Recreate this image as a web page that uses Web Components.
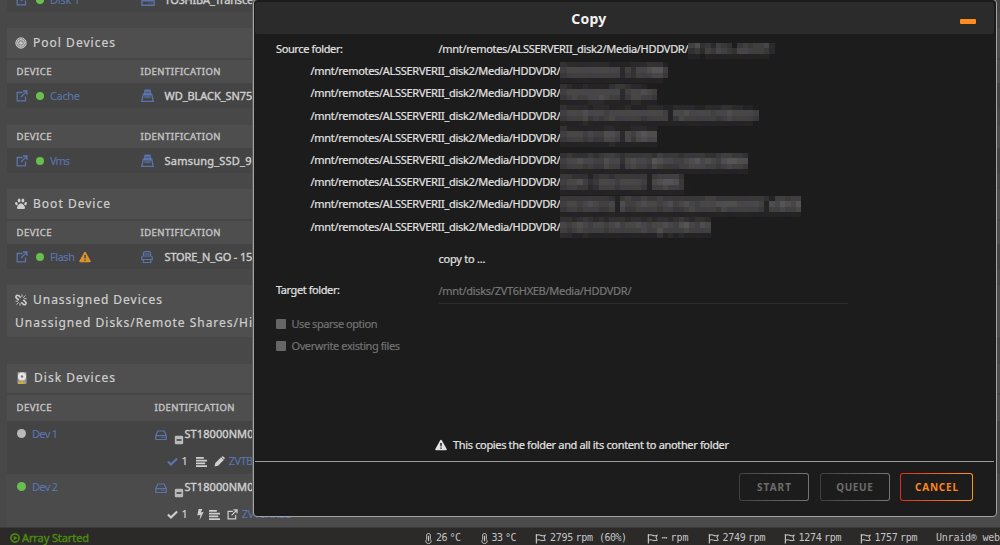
<!DOCTYPE html>
<html lang="en">
<head>
<meta charset="utf-8">
<title>Main - Copy</title>
<style>
  html, body {
    margin: 0;
    height: 545px;
    overflow: hidden;
    background: #484848;
    font-family: "Noto Sans", "Open Sans", sans-serif;
  }
</style>
</head>
<body>
<main-page></main-page>

<script>
/* ---------- ui-text: one line of text, tracked to a given width ---------- */
class UiText extends HTMLElement {
  constructor() {
    super();
    this.attachShadow({ mode: 'open' });
    this.shadowRoot.innerHTML = `
      <style>
        :host { display: block; height: 16px; line-height: 16px; flex: none; }
        span { display: inline-block; white-space: pre; height: 16px; vertical-align: top; -webkit-text-stroke: var(--heavy, .2px) currentColor; }
      </style>
      <span><slot></slot></span>
    `;
  }

  connectedCallback() {
    const width = parseFloat(this.getAttribute('width'));
    if (!width) return;
    const span = this.shadowRoot.querySelector('span');
    span.style.letterSpacing = '0px';
    const natural = span.getBoundingClientRect().width;
    const gap = (width - natural) / Math.max(1, this.textContent.length - 1);
    span.style.letterSpacing = gap.toFixed(3) + 'px';
    this.style.width = width + 'px';
  }
}

/* ---------- ui-icon: inline svg icons ---------- */
const ICONS = {
  external: '<path d="M6.5 2.5H1.2v8.3h8.3V6.5M5 7L10.6 1.4M7 1h4v4" fill="none" stroke="currentColor" stroke-width="1.3"/>',
  target: '<circle cx="6" cy="6" r="5.2" fill="#888" stroke="currentColor" stroke-width=".9"/><circle cx="6" cy="6" r="3.4" fill="none" stroke="currentColor"/><circle cx="6" cy="6" r="1.6" fill="currentColor"/>',
  paw: '<ellipse cx="4.1" cy="2.6" rx="1.4" ry="2"/><ellipse cx="7.9" cy="2.6" rx="1.4" ry="2"/><ellipse cx="1.4" cy="5.6" rx="1.2" ry="1.7" transform="rotate(-20 1.4 5.6)"/><ellipse cx="10.6" cy="5.6" rx="1.2" ry="1.7" transform="rotate(20 10.6 5.6)"/><path d="M6 5.4c2 0 4 2.600 4 4.300 0 2-2.500 1.200-4 1.200s-4 .8-4-1.200c0-1.700 2-4.300 4-4.300z"/>',
  unlink: '<g fill="none" stroke="currentColor" stroke-width="1.6" stroke-linecap="round"><path d="M5.300 3.300L3.700 1.700Q1.800.6 1.100 2.200q-.5 1 .5 2L3.300 5.700M6.700 8.700l1.600 1.600q1.900 1.100 2.600-.5.500-1-.5-2L8.700 6.300"/><path d="M3.500 8.500L1.700 10.300M5 9.500v1.800M2.600 7.200H.9M7 .8V2.500M8.500 3.500l1.600-1.800M9.400 4.700h1.800" stroke-width=".9"/></g>',
  disk: '<rect x="1.500" width="9" height="12" rx="1" fill="#999"/><circle cx="6" cy="4.500" r="4" fill="#e6e6e6"/><circle cx="6" cy="4.500" r="1.200" fill="#777"/><path d="M2 12V10l2.500.5L7 7.500v3.500l3 1z" fill="#d9a92c"/>',
  nvme: '<path d="M3.300.5h5.400l.9 5.500H2.400z"/><path d="M2.300 4L.7 11.400h10.600L9.700 4" fill="none" stroke="currentColor" stroke-width="1.200"/><path d="M3 6h6v2.500H3z" opacity=".6"/><path d="M4 3h4" stroke="#444" stroke-width=".7"/>',
  usb: '<g fill="none" stroke="currentColor" stroke-width="1.200"><path d="M2.500 5V2.200Q2.500.7 4 .7h4q1.500 0 1.500 1.500V5M.7 8.500V6.600Q.7 5 2.200 5h7.600q1.500 0 1.500 1.600v1.900z"/><path d="M2.200 8.500v3h7.600v-3M3.500 3h5"/></g>',
  hdd: '<path d="M.8 6.500L2.800 2h6.400l2 4.500v4H.8zM.8 6.700h10.400" fill="none" stroke="currentColor" stroke-width="1.200"/><path d="M6.500 8.100h1v1h-1zM8.700 8.100h1v1h-1z"/>',
  warn: '<path fill-rule="evenodd" d="M6 .8Q6.500.8 6.800 1.300L11.700 10q.4 1.200-.8 1.200H1.100Q-.1 11.200.3 10L5.200 1.300Q5.500.8 6 .8zM5.200 4l.2 3.600h1.200L6.800 4zM5.300 8.500v1.300h1.400V8.500z"/>',
  check: '<path d="M1 6l3.300 3.300L11 2.700" fill="none" stroke="currentColor" stroke-width="2.300"/>',
  lines: '<path d="M0 1h8.500v2H0zM0 4h12v2H0zM0 7h10v2H0zM0 10h12v2H0z"/>',
  pencil: '<path d="M.6 11.400l.8-3.800L7.700 1.300l3 3L4.400 10.600zM8.500.7Q9.600-.2 10.500.7l.8.8q.9.900 0 1.900l-.3.300L8.200 1z"/>',
  bolt: '<path d="M4 0h4L6.300 3.700 9.500 3 5 12l.9-5.700-3.400.8z"/>',
  minus: '<rect x="1" y="1" width="10" height="10" rx="1.500" fill="#b9b9b9"/><path d="M3 5h6v2H3z" fill="#484848"/>',
  play: '<circle cx="6" cy="6" r="4.900" fill="none" stroke="currentColor" stroke-width="1.900"/><path d="M4.400 3.300L9 6 4.400 8.700z"/>',
  thermo: '<g fill="none" stroke="currentColor"><path d="M4 7V2q0-1.500 2-1.500T8 2v5q1.300 1.200.8 2.800Q8.200 11.500 6 11.500T3.200 9.800Q2.700 8.200 4 7z"/><path d="M6 3v6" stroke-width="1.300"/></g>',
  flag: '<path d="M1.500 1v10.500" stroke="currentColor" stroke-width="1.300"/><path d="M2 2.500q2-1.200 4 0t5 0L9.800 5 11 7.800q-3 1-5 0t-4 0" fill="none" stroke="currentColor" stroke-width="1.100"/>'
};

class UiIcon extends HTMLElement {
  connectedCallback() {
    if (!this.shadowRoot) this.attachShadow({ mode: 'open' });
    const size = this.getAttribute('size') || 12;
    this.shadowRoot.innerHTML = `
      <style>
        :host { display: inline-block; flex: none; width: ${size}px; height: ${size}px; }
        svg { display: block; }
      </style>
      <svg width="${size}" height="${size}" viewBox="0 0 12 12" fill="currentColor">${ICONS[this.getAttribute('name')]}</svg>
    `;
  }
}

/* ---------- section-title: band with icon and heading ---------- */
class SectionTitle extends HTMLElement {
  constructor() {
    super();
    this.attachShadow({ mode: 'open' });
    this.shadowRoot.innerHTML = `
      <style>
        :host {
          display: flex; align-items: center; box-sizing: border-box;
          height: 30px; padding-left: 8px; gap: 6px;
          background: #4f4f4f; color: #cfcfcf; font-size: 12px;
        }
      </style>
      <slot></slot>
    `;
  }
}

/* ---------- table-head: DEVICE / IDENTIFICATION ---------- */
class TableHead extends HTMLElement {
  connectedCallback() {
    if (!this.shadowRoot) this.attachShadow({ mode: 'open' });
    this.shadowRoot.innerHTML = `
      <style>
        :host {
          display: grid; align-items: center; box-sizing: border-box;
          grid-template-columns: ${this.getAttribute('col') || 124}px 1fr;
          height: 23px; padding-left: 9.500px;
          background: #4e4e4e; color: #c2c2c2; font-size: 9.500px;
          --heavy: .4px;
        }
      </style>
      <ui-text width="35">DEVICE</ui-text>
      <ui-text width="80">IDENTIFICATION</ui-text>
    `;
  }
}

/* ---------- device-row: one row of pool / boot tables ---------- */
class DeviceRow extends HTMLElement {
  constructor() {
    super();
    this.attachShadow({ mode: 'open' });
    this.shadowRoot.innerHTML = `
      <style>
        :host {
          display: grid; grid-template-columns: 124.500px 24px 1fr; align-items: center;
          box-sizing: border-box; height: 25px; padding-left: 9px;
          background: #444; color: #cecece; font-size: 11px; --heavy: .4px;
        }
        .name { display: flex; align-items: center; color: #5a75ae; --heavy: .1px; }
        i { width: 8px; height: 8px; border-radius: 50%; background: #68bf50; margin: 1px 6.500px 0 7.500px; }
        ui-icon, ::slotted(ui-icon) { color: #5a75ae; }
      </style>
      <div class="name"><ui-icon name="external"></ui-icon><i></i><slot name="name"></slot></div>
      <slot name="icon"></slot>
      <slot></slot>
    `;
  }
}

/* ---------- disk-row: two-line row of the unassigned disks ---------- */
class DiskRow extends HTMLElement {
  constructor() {
    super();
    this.attachShadow({ mode: 'open' });
    this.shadowRoot.innerHTML = `
      <style>
        :host {
          display: grid; grid-template-columns: 138px 1fr; box-sizing: border-box;
          height: 53px; padding-left: 9.500px;
          background: var(--row, #444); color: #d0d0d0; font-size: 11px;
        }
        .name { display: flex; align-items: center; height: 26px; gap: 6.500px; color: #5a75ae; --heavy: .1px; }
        i { width: 9px; height: 9px; border-radius: 50%; background: var(--dot, #b9b9b9); }
        .id { display: flex; align-items: center; height: 26px; --heavy: .4px; }
        .id .hdd { color: #5a75ae; margin-top: 2px; }
        .id .box { margin: 13px 1px 0 7px; }
        .sub { display: flex; align-items: center; height: 29px; padding-left: 12px; }
      </style>
      <div class="name"><i></i><slot name="name"></slot></div>
      <div>
        <div class="id">
          <ui-icon class="hdd" name="hdd"></ui-icon>
          <ui-icon class="box" name="minus" size="10"></ui-icon>
          <ui-text width="101">ST18000NM000J-2T</ui-text>
        </div>
        <div class="sub"><slot></slot></div>
      </div>
    `;
  }
}

/* ---------- pixel-mask: mosaic over the hidden folder names ---------- */
class PixelMask extends HTMLElement {
  connectedCallback() {
    if (!this.shadowRoot) this.attachShadow({ mode: 'open' });
    const cell = 16 / 3;
    const rows = this.getAttribute('rows').split(' ');
    const tints = [[1, 0, 0], [0, 0, 1], [0, 1, 0], [0, 0, 2], [2, 0, 0]];
    let rects = '';
    rows.forEach((row, y) => {
      row.split('').forEach((level, x) => {
        const v = 28 + level * 7;
        const t = tints[(x * 7 + y * 3) % 5];
        const x0 = x === 0 ? 0 : x * cell + 1.3;
        const w = x === 0 ? cell + 1.3 : cell;
        rects += `<rect x="${x0}" y="${y * cell}" width="${w}" height="${cell}" fill="rgb(${v + t[0] * 2},${v + t[1] * 2},${v + t[2] * 2})"/>`;
      });
    });
    const w = rows[0].length * cell + 2;
    const h = rows.length * cell;
    this.shadowRoot.innerHTML = `
      <style>
        :host { position: absolute; left: 249.500px; top: ${this.getAttribute('dy')}px; }
        svg { display: block; }
      </style>
      <svg width="${w}" height="${h}" shape-rendering="crispEdges">${rects}</svg>
    `;
  }
}

/* ---------- path-line ---------- */
class PathLine extends HTMLElement {
  connectedCallback() {
    if (!this.shadowRoot) this.attachShadow({ mode: 'open' });
    this.shadowRoot.innerHTML = `
      <style>
        :host { display: flex; align-items: center; position: relative; height: 22.200px; }
      </style>
      <ui-text width="250">/mnt/remotes/ALSSERVERII_disk2/Media/HDDVDR/</ui-text>
      <pixel-mask dy="${this.getAttribute('dy')}" rows="${this.getAttribute('mask')}"></pixel-mask>
    `;
  }
}

/* ---------- outline-button ---------- */
class OutlineButton extends HTMLElement {
  constructor() {
    super();
    this.attachShadow({ mode: 'open' });
    this.shadowRoot.innerHTML = `
      <style>
        :host { display: block; }
        button {
          display: flex; align-items: center; justify-content: center;
          box-sizing: border-box; width: 100%; height: 28px; padding: 0;
          border: 1.500px solid transparent; border-radius: 3px;
          background:
            linear-gradient(#1c1c1c, #1c1c1c) padding-box,
            linear-gradient(90deg, var(--from, #404040), var(--to, #747474)) border-box;
          color: var(--ink, #6c6c6c);
          font: bold 10px "Noto Sans", sans-serif;
          --heavy: 0;
        }
      </style>
      <button><slot></slot></button>
    `;
  }
}

/* ---------- copy-dialog ---------- */
// one entry per source folder: [top offset of the mosaic, brightness rows]
const FOLDERS = [
  [4.7, '5734254304545562 3425465436655542 1101111111111110'],
  [2.300, '32222222211112223331 56666666666253667885 45555555555243555664 11111111111111111110'],
  [1.400, '3211211113443221000 5666666666625667650 4565566765524665540 1111122211111221110'],
  [.6, '3222212221112111222112222112223322110 5666766656666666666516676666566766665 4555645456555554555514655555545655554 1111211111111111111111111111111111110'],
  [-.3, '3111111122111222110 5666565577626578770 4555454466526467660 1111111112111111110'],
  [4.200, '343334345543444443544434444334554430 566766557663676658766556786765788770 455545446552565546544455666554565540 111111111111111111111111111111111110'],
  [3.200, '443331344344444414555530 566753466656666516788740 455442355545555415565540 111111111111111111111110'],
  [2.300, '444444444314544544544444444554444444443155455 566567655617556766567567656667777666651768768 455455544516445555455445655554655555541556556 111111111111111111111111111111111111111111111'],
  [1.300, '3323432323332332323323432332 6567656656756676566765786576 5456555545555556557555565555 2211211111111111113121211111']
];

class CopyDialog extends HTMLElement {
  constructor() {
    super();
    this.attachShadow({ mode: 'open' });
    this.shadowRoot.innerHTML = `
      <style>
        :host {
          display: flex; flex-direction: column; box-sizing: border-box;
          background: #1c1c1c; border: 1px solid #a3a3a3; border-radius: 4px;
          color: #e2e2e2; font-size: 11px; box-shadow: -1px 0 0 #5f5f5f;
        }
        header {
          display: grid; grid-template-columns: 1fr auto 1fr; align-items: center;
          margin: 2px 2.500px 0 1px; height: 32px; border-radius: 3px; background: #2b2b2b;
          font-size: 14px; font-weight: bold; color: #f2f2f2; --heavy: 0;
        }
        header ui-text { margin: 2px 18px 0 -53px; }
        .min { justify-self: end; width: 16px; height: 5px; border-radius: 1px; background: #ff8c1f; margin: 7px 18px 0 0; }
        .body { flex: 1; padding: 4px 22px 0; }
        .row { display: grid; grid-template-columns: 162.500px 1fr; align-items: center; }
        .list { padding-left: 34.500px; }
        .to { padding: 13px 0 0 162.500px; height: 28px; }
        .target { margin-top: -2px; }
        .input { box-sizing: border-box; width: 409.500px; height: 27px; padding-top: 6px; border-bottom: 1.500px solid #2d2d2d; color: #777; }
        .opts { padding-top: 10px; }
        .opt { display: flex; align-items: center; height: 21.500px; gap: 5.500px; color: #727272; }
        .opt b { width: 10px; height: 10px; border-radius: 1px; background: #666; }
        .note { display: flex; align-items: center; gap: 6px; height: 20px; padding-left: 181px; margin-bottom: 6px; }
        footer { display: flex; gap: 10.500px; border-top: 1px solid #9d9d9d; height: 55px; margin: 0 2.500px 0 1px; padding: 11px 20.500px 0 0; box-sizing: border-box; justify-content: flex-end; }
        .cancel { --from: #e22a1c; --to: #ff951f; --ink: #ff8420; }
      </style>
      <header><span></span><ui-text width="35">Copy</ui-text><span class="min"></span></header>
      <div class="body">
        <div class="row"><ui-text width="67">Source folder:</ui-text><div id="first"></div></div>
        <div class="list" id="list"></div>
        <div class="to"><ui-text width="47">copy to ...</ui-text></div>
        <div class="row target">
          <ui-text width="64">Target folder:</ui-text>
          <div class="input"><ui-text width="193">/mnt/disks/ZVT6HXEB/Media/HDDVDR/</ui-text></div>
        </div>
        <div class="opts">
          <div class="opt"><b></b><ui-text width="86">Use sparse option</ui-text></div>
          <div class="opt"><b></b><ui-text width="108.500">Overwrite existing files</ui-text></div>
        </div>
      </div>
      <div class="note"><ui-icon name="warn"></ui-icon><ui-text width="276">This copies the folder and all its content to another folder</ui-text></div>
      <footer>
        <outline-button style="width:70px"><ui-text width="34">START</ui-text></outline-button>
        <outline-button style="width:70px"><ui-text width="36.500">QUEUE</ui-text></outline-button>
        <outline-button class="cancel" style="width:73px"><ui-text width="43">CANCEL</ui-text></outline-button>
      </footer>
    `;

    FOLDERS.forEach(([dy, mask], i) => {
      const line = document.createElement('path-line');
      line.setAttribute('dy', dy);
      line.setAttribute('mask', mask);
      this.shadowRoot.getElementById(i ? 'list' : 'first').appendChild(line);
    });
  }
}

/* ---------- status-bar ---------- */
class StatusBar extends HTMLElement {
  constructor() {
    super();
    this.attachShadow({ mode: 'open' });
    this.shadowRoot.innerHTML = `
      <style>
        :host {
          display: flex; align-items: center; box-sizing: border-box; overflow: hidden;
          height: 18px; padding: 3px 0 0 10px; background: #2b2a29; color: #c4c4c4;
          border-top: 1px solid #3a3a39;
          font: 10px "DejaVu Sans Mono", monospace; --heavy: 0;
        }
        .array { display: flex; align-items: center; gap: 2px; width: 416.500px; color: #4f8a10; font: 11px "Noto Sans", sans-serif; --heavy: .4px; }
        .item { display: flex; align-items: center; flex: none; word-spacing: -3px; }
        .temp { width: 55.500px; }
        .temp ui-icon { margin-right: 2px; }
        .fan ui-icon { margin: 0 4px 0 1px; }
      </style>
      <div class="array"><ui-icon name="play" size="10"></ui-icon><ui-text width="67">Array Started</ui-text></div>
      <div class="item temp"><ui-icon name="thermo" size="11"></ui-icon><ui-text width="25">26 °C</ui-text></div>
      <div class="item temp"><ui-icon name="thermo" size="11"></ui-icon><ui-text width="25">33 °C</ui-text></div>
      <div class="item fan" style="width:111.500px"><ui-icon name="flag" size="11"></ui-icon><ui-text width="43">2795 rpm</ui-text><ui-text width="28" style="margin-left:6px">(60%)</ui-text></div>
      <div class="item fan" style="width:61px"><ui-icon name="flag" size="11"></ui-icon><ui-text width="27">⋯ rpm</ui-text></div>
      <div class="item fan" style="width:76px"><ui-icon name="flag" size="11"></ui-icon><ui-text width="43">2749 rpm</ui-text></div>
      <div class="item fan" style="width:76px"><ui-icon name="flag" size="11"></ui-icon><ui-text width="43">1274 rpm</ui-text></div>
      <div class="item fan" style="width:77.500px"><ui-icon name="flag" size="11"></ui-icon><ui-text width="43">1757 rpm</ui-text></div>
      <ui-text width="64">Unraid® web</ui-text>
    `;
  }
}

/* ---------- main-page ---------- */
class MainPage extends HTMLElement {
  constructor() {
    super();
    this.attachShadow({ mode: 'open' });
    this.shadowRoot.innerHTML = `
      <style>
        :host { display: flex; flex-direction: column; position: relative; width: 1000px; height: 545px; overflow: hidden; }
        main { height: 527px; padding-left: 7px; overflow: hidden; box-sizing: border-box; }
        .gap { height: 17px; }
        .line { height: 2px; background: #464646; }
        .blue { color: #5a75ae; --heavy: .1px; }
        .shares { height: 22px; padding-left: 8px; background: #4f4f4f; color: #cfcfcf; font-size: 12px; }
        copy-dialog { position: absolute; left: 253px; top: -1px; width: 744px; height: 518px; }
      </style>
      <main>
        <device-row style="margin-top:-13px">
          <ui-text slot="name" width="30">Disk 1</ui-text>
          <ui-icon slot="icon" name="hdd" size="14"></ui-icon>
          <ui-text width="102">TOSHIBA_Transcend</ui-text>
        </device-row>
        <div style="height:16px"></div>
        <section-title><ui-icon name="target"></ui-icon><ui-text width="82">Pool Devices</ui-text></section-title>
        <div class="line"></div>
        <table-head></table-head>
        <device-row>
          <ui-text slot="name" width="30">Cache</ui-text>
          <ui-icon slot="icon" name="nvme" size="13"></ui-icon>
          <ui-text width="94">WD_BLACK_SN750</ui-text>
        </device-row>
        <div class="gap"></div>
        <table-head></table-head>
        <device-row>
          <ui-text slot="name" width="20">Vms</ui-text>
          <ui-icon slot="icon" name="nvme" size="13"></ui-icon>
          <ui-text width="100">Samsung_SSD_970</ui-text>
        </device-row>
        <div style="height:16px"></div>
        <section-title><ui-icon name="paw"></ui-icon><ui-text width="77">Boot Device</ui-text></section-title>
        <div class="line"></div>
        <table-head></table-head>
        <device-row>
          <div slot="name" style="display:flex;align-items:center;gap:4px">
            <ui-text width="25">Flash</ui-text>
            <ui-icon name="warn" style="color:#d9922e"></ui-icon>
          </div>
          <ui-icon slot="icon" name="usb" size="12"></ui-icon>
          <ui-text width="94">STORE_N_GO - 151</ui-text>
        </device-row>
        <div style="height:16px"></div>
        <section-title><ui-icon name="unlink"></ui-icon><ui-text width="129">Unassigned Devices</ui-text></section-title>
        <div class="shares"><ui-text width="286">Unassigned Disks/Remote Shares/Historical</ui-text></div>
        <div style="height:26.500px"></div>
        <section-title style="height:29px"><ui-icon name="disk" style="margin-left:1px"></ui-icon><ui-text width="81">Disk Devices</ui-text></section-title>
        <div class="line"></div>
        <table-head col="138" style="height:26px"></table-head>
        <disk-row>
          <ui-text slot="name" width="26">Dev 1</ui-text>
          <ui-icon class="blue" name="check" size="11"></ui-icon>
          <ui-text style="margin:0 8px 0 4px">1</ui-text>
          <ui-icon name="lines" size="11"></ui-icon>
          <ui-icon name="pencil" size="11" style="margin:0 4px 0 7px"></ui-icon>
          <ui-text class="blue" width="50">ZVTBHXEB</ui-text>
        </disk-row>
        <disk-row style="--row:#4b4b4b;--dot:#68bf50;height:56px">
          <ui-text slot="name" width="26">Dev 2</ui-text>
          <ui-icon name="check" size="11"></ui-icon>
          <ui-text style="margin:0 7px 0 4px">1</ui-text>
          <ui-icon name="bolt" size="11"></ui-icon>
          <ui-icon name="lines" size="11" style="margin:0 7px 0 3px"></ui-icon>
          <ui-icon name="external" size="11"></ui-icon>
          <ui-text class="blue" width="50" style="margin-left:4px">ZVT6HXEB</ui-text>
        </disk-row>
      </main>
      <status-bar></status-bar>
      <copy-dialog></copy-dialog>
    `;
  }
}

customElements.define('ui-text', UiText);
customElements.define('ui-icon', UiIcon);
customElements.define('section-title', SectionTitle);
customElements.define('table-head', TableHead);
customElements.define('device-row', DeviceRow);
customElements.define('disk-row', DiskRow);
customElements.define('pixel-mask', PixelMask);
customElements.define('path-line', PathLine);
customElements.define('outline-button', OutlineButton);
customElements.define('copy-dialog', CopyDialog);
customElements.define('status-bar', StatusBar);
customElements.define('main-page', MainPage);
</script>
</body>
</html>
